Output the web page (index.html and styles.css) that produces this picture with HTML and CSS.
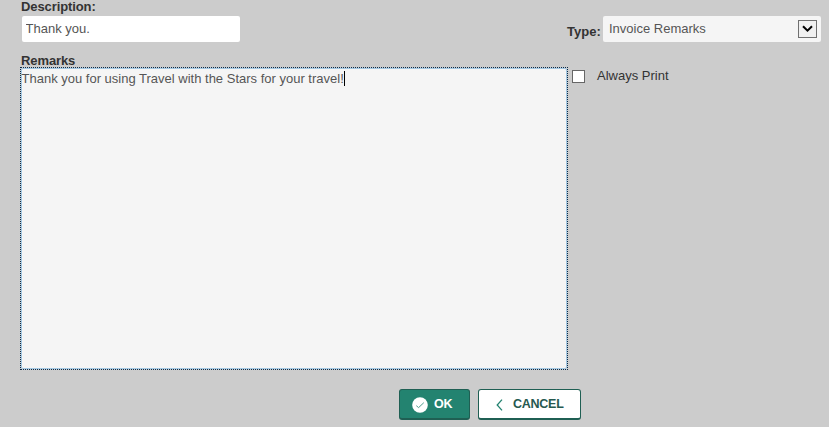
FILE: index.html
```html
<!DOCTYPE html>
<html lang="en">
<head>
<meta charset="utf-8">
<title>Remarks</title>
<link rel="stylesheet" href="styles.css">
</head>
<body>
<form class="form">
  <div class="row row-top">
    <div class="description">
      <label class="label" for="description">Description:</label>
      <input class="input" id="description" type="text" value="Thank you.">
    </div>
    <div class="type">
      <span class="label type-label">Type:</span>
      <div class="select">
        <span>Invoice Remarks</span>
        <span class="select-button">
          <svg width="11" height="8" viewBox="0 0 11 8"><path d="M1 1.2L5.5 5.7L10 1.2" fill="none" stroke="#000" stroke-width="2"/></svg>
        </span>
      </div>
    </div>
  </div>
  <div class="row">
    <div class="remarks">
      <span class="label remarks-label">Remarks</span>
      <div class="textarea"><div class="textarea-inner"><span class="textarea-text">Thank you for using Travel with the Stars for your travel!</span><span class="caret"></span></div></div>
    </div>
    <label class="check"><span class="box"></span><span>Always Print</span></label>
  </div>
  <div class="actions">
    <button class="button button-ok" type="button">
      <svg width="16" height="16" viewBox="0 0 16 16"><circle cx="8" cy="8" r="7.8" fill="#fff"/><path d="M4.3 8.7L6.6 10.6L11.8 5.7" fill="none" stroke="#4f9c8d" stroke-width="1"/></svg>
      <span>OK</span>
    </button>
    <button class="button button-cancel" type="button">
      <svg width="7" height="12" viewBox="0 0 7 12"><path d="M6 .6L1.2 6L6 11.4" fill="none" stroke="#238370" stroke-width="1.3"/></svg>
      <span>CANCEL</span>
    </button>
  </div>
</form>
</body>
</html>
```
FILE: styles.css
```css
* {
  box-sizing: border-box;
}

body {
  margin: 0;
  height: 427px;
  overflow: hidden;
  background: #ccc;
  color: #333;
  font: 13px/15px "Liberation Sans", Arial, sans-serif;
}

.form {
  padding-left: 20px;
}

.row {
  display: flex;
}

.row-top {
  height: 53px;
}

.label {
  display: block;
  height: 14px;
  padding-left: 1px;
  font-weight: bold;
  line-height: 14px;
  letter-spacing: -0.1px;
}

.remarks-label {
  line-height: 16px;
}

.description {
  width: 546px;
}

.description .label {
  height: 16px;
}

.input {
  display: block;
  width: 218px;
  height: 26px;
  margin-left: 2px;
  padding: 0 3.5px 1px;
  border: 0;
  border-radius: 2px;
  background: #fff;
  color: #555;
  font: inherit;
}

.type {
  display: flex;
  padding-top: 16px;
}

.type-label {
  width: 37px;
  padding-top: 9px;
  letter-spacing: 0;
}

.select {
  display: flex;
  align-items: center;
  justify-content: space-between;
  width: 218px;
  height: 26px;
  padding: 0 4px 0 6px;
  border-radius: 2px;
  background: #f5f5f5;
  color: #555;
}

.select > span:first-child {
  padding-bottom: 1px;
}

.select-button {
  display: flex;
  align-items: center;
  justify-content: center;
  width: 19px;
  height: 18px;
  border: 1px solid #707070;
  background: #f0f0f0;
}

.remarks {
  width: 548px;
}

.textarea {
  height: 303px;
  border: 1px dotted #0b2c4a;
}

.textarea-inner {
  display: flex;
  height: 100%;
  padding-top: 2px;
  border: 1px solid #a3c8e3;
  border-radius: 2px;
  background: #f5f5f5;
  color: #555;
}

.textarea-text {
  margin-left: -0.5px;
}

.caret {
  width: 1px;
  height: 15px;
  background: #000;
}

.check {
  display: flex;
  gap: 12px;
  padding: 15px 0 0 4px;
}

.box {
  width: 13px;
  height: 13px;
  margin-top: 2px;
  border: 1px solid #666;
  background: #fff;
}

.actions {
  display: flex;
  gap: 8px;
  padding: 19px 0 0 379px;
}

.button {
  display: flex;
  align-items: center;
  height: 31px;
  padding: 0 0 1px;
  border: 1px solid #1f5f53;
  border-bottom-width: 2px;
  border-radius: 3px;
  font: bold 12.5px/15px "Liberation Sans", Arial, sans-serif;
  letter-spacing: -0.25px;
}

.button span {
  padding-top: 2px;
}

.button-ok {
  gap: 6px;
  width: 71px;
  padding-left: 12px;
  background: #238370;
  color: #fff;
}

.button-ok svg {
  margin-top: 3px;
}

.button-cancel {
  gap: 10px;
  width: 103px;
  padding-left: 17px;
  background: #fff;
  color: #26594f;
}

.button-cancel svg {
  margin-top: 3px;
}
```
